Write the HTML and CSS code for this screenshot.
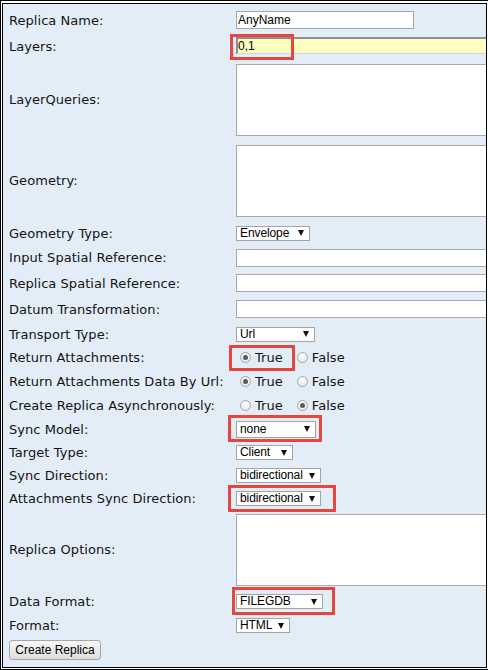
FILE: index.html
```html
<!DOCTYPE html>
<html>
<head>
<meta charset="utf-8">
<link rel="stylesheet" href="styles.css">
</head>
<body>
<div class="frame">
  <div class="panel">
    <form class="form">
      <div class="row r26"><span class="lbl">Replica Name:</span><input class="txt name" type="text" value="AnyName"></div>
      <div class="row r26"><span class="lbl">Layers:</span><input class="txt wide hl" type="text" value="0,1"></div>
      <div class="row r81"><span class="lbl">LayerQueries:</span><textarea class="area"></textarea></div>
      <div class="row r81"><span class="lbl">Geometry:</span><textarea class="area"></textarea></div>
      <div class="row r24"><span class="lbl">Geometry Type:</span><span class="sel w74"><select><option>Envelope</option></select></span></div>
      <div class="row r25"><span class="lbl">Input Spatial Reference:</span><input class="txt wide" type="text"></div>
      <div class="row r26"><span class="lbl">Replica Spatial Reference:</span><input class="txt wide" type="text"></div>
      <div class="row r26"><span class="lbl">Datum Transformation:</span><input class="txt wide" type="text"></div>
      <div class="row r24"><span class="lbl">Transport Type:</span><span class="sel w79"><select><option>Url</option></select></span></div>
      <div class="row r23"><span class="lbl">Return Attachments:</span><span class="radios"><label class="opt"><input type="radio" name="ra" checked>True</label><label class="opt"><input type="radio" name="ra">False</label></span></div>
      <div class="row r24"><span class="lbl">Return Attachments Data By Url:</span><span class="radios"><label class="opt"><input type="radio" name="rb" checked>True</label><label class="opt"><input type="radio" name="rb">False</label></span></div>
      <div class="row r24"><span class="lbl">Create Replica Asynchronously:</span><span class="radios"><label class="opt"><input type="radio" name="rc">True</label><label class="opt"><input type="radio" name="rc" checked>False</label></span></div>
      <div class="row r24"><span class="lbl">Sync Model:</span><span class="sel w80 tall"><select><option>none</option></select></span></div>
      <div class="row r23"><span class="lbl">Target Type:</span><span class="sel w57"><select><option>Client</option></select></span></div>
      <div class="row r23"><span class="lbl">Sync Direction:</span><span class="sel w85"><select><option>bidirectional</option></select></span></div>
      <div class="row r23"><span class="lbl">Attachments Sync Direction:</span><span class="sel w85"><select><option>bidirectional</option></select></span></div>
      <div class="row r79"><span class="lbl">Replica Options:</span><textarea class="area"></textarea></div>
      <div class="row r25"><span class="lbl">Data Format:</span><span class="sel w87"><select><option>FILEGDB</option></select></span></div>
      <div class="row r23"><span class="lbl">Format:</span><span class="sel w54"><select><option>HTML</option></select></span></div>
      <div class="row r26"><button class="btn" type="button">Create Replica</button></div>
    </form>
    <div class="mark m1"></div>
    <div class="mark m2"></div>
    <div class="mark m3"></div>
    <div class="mark m4"></div>
    <div class="mark m5"></div>
  </div>
</div>
</body>
</html>
```
FILE: styles.css
```css
html, body {
  margin: 0;
  padding: 0;
  background: #ffffff;
}

.frame {
  box-sizing: border-box;
  width: 488px;
  height: 670px;
  border-top: 1px solid #000;
  border-left: 1px solid #000;
  border-bottom: 1px solid #000;
  padding: 2px 1px 1px 1px;
  background: #fff;
}

.panel {
  position: relative;
  box-sizing: border-box;
  width: 485px;
  height: 665px;
  border: 1px solid #000;
  background: #e3edf7;
  overflow: hidden;
}

.form {
  margin: 0;
  padding: 3px 0 0 6px;
  font-family: "DejaVu Sans", Verdana, sans-serif;
  font-size: 13px;
  letter-spacing: 0.05px;
  color: #141414;
}

.row {
  display: flex;
  align-items: center;
}
.r23 { height: 23px; }
.r24 { height: 24px; }
.r25 { height: 25px; }
.r26 { height: 26px; }
.r79 { height: 79px; }
.r81 { height: 81px; }

.lbl {
  flex: none;
  width: 227px;
  white-space: nowrap;
}

.txt {
  flex: none;
  box-sizing: border-box;
  height: 18px;
  margin: 0;
  padding: 0 1px;
  border: 1px solid #a9a9a9;
  background: #fff;
  font-family: "Liberation Sans", Arial, sans-serif;
  font-size: 12px;
  letter-spacing: 0;
  color: #000;
  outline: none;
}
.name { width: 178px; }
.wide { width: 260px; }
.hl {
  height: 17px;
  margin-top: -1px;
  background: #ffffc2;
  border-top: 2px solid #8e8e8e;
  border-left: 2px solid #8e8e8e;
  border-right: 1px solid #dcdcdc;
  border-bottom: 1px solid #cfd8e2;
  padding-left: 0;
}

.area {
  flex: none;
  box-sizing: border-box;
  width: 260px;
  height: 72px;
  margin: 0;
  padding: 0;
  border: 1px solid #a9a9a9;
  background: #fff;
  resize: none;
}

.sel {
  position: relative;
  flex: none;
  display: block;
  height: 15px;
}
.sel select {
  display: block;
  box-sizing: border-box;
  width: 100%;
  height: 100%;
  margin: 0;
  padding: 0 0 0 3px;
  border: 1px solid #a3a3a3;
  border-radius: 0;
  background: #fff;
  appearance: none;
  -webkit-appearance: none;
  font-family: "Liberation Sans", Arial, sans-serif;
  font-size: 12px;
  letter-spacing: -0.1px;
  line-height: 13px;
  color: #000;
}
.sel::after {
  content: "";
  position: absolute;
  right: 6px;
  top: 50%;
  margin-top: -3px;
  border-left: 3.5px solid transparent;
  border-right: 3.5px solid transparent;
  border-top: 6px solid #111;
}
.tall { height: 17px; }
.w54 { width: 54px; }
.w57 { width: 57px; }
.w74 { width: 74px; }
.w79 { width: 79px; }
.w80 { width: 80px; }
.w85 { width: 85px; }
.w87 { width: 87px; }

.radios {
  display: flex;
  align-items: center;
  padding-left: 4px;
}
.opt {
  display: flex;
  align-items: center;
  margin-right: 14px;
}
.opt input {
  appearance: none;
  -webkit-appearance: none;
  box-sizing: border-box;
  width: 11px;
  height: 11px;
  margin: 0 4px 0 0;
  border: 1px solid #a7a7a7;
  border-radius: 50%;
  background: radial-gradient(circle at 50% 35%, #ffffff 0, #ebebeb 70%, #dcdcdc 100%);
  position: relative;
}
.opt input:checked::after {
  content: "";
  position: absolute;
  left: 2px;
  top: 2px;
  width: 5px;
  height: 5px;
  border-radius: 50%;
  background: #5a5a5a;
}

.btn {
  box-sizing: border-box;
  width: 92px;
  height: 20px;
  margin: 0;
  padding: 0;
  border: 1px solid #a6a6a6;
  border-radius: 3px;
  background: linear-gradient(#f6f6f6, #dedede);
  font-family: "Liberation Sans", Arial, sans-serif;
  font-size: 12px;
  letter-spacing: 0;
  color: #000;
}

.mark {
  position: absolute;
  box-sizing: border-box;
  border: 3px solid #e5463d;
}
.m1 { left: 227px; top: 30px; width: 64px; height: 26px; }
.m2 { left: 226px; top: 341px; width: 66px; height: 26px; }
.m3 { left: 225px; top: 411px; width: 94px; height: 27px; }
.m4 { left: 225px; top: 481px; width: 108px; height: 27px; }
.m5 { left: 229px; top: 583px; width: 103px; height: 28px; }
```
